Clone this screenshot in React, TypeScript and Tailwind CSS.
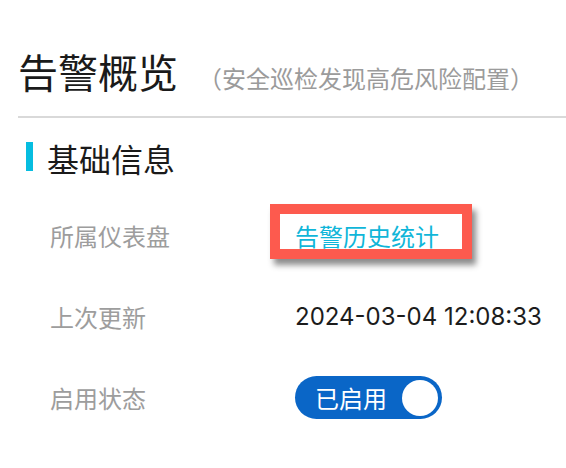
export default function App() {
  return (
    <div
      className="w-[566px] h-[468px] bg-white overflow-hidden"
      style={{ fontFamily: '"Noto Sans CJK SC", "Noto Sans", sans-serif' }}
    >
      <div className="pt-[51px] pl-[18px] flex items-baseline">
        <h1 className="text-[40px] leading-[40px] text-[#1a1a1a] font-normal">告警概览</h1>
        <span className="ml-[20px] text-[24px] leading-[24px] text-[#9b9b9b]">（安全巡检发现高危风险配置）</span>
      </div>
      <div className="ml-[18px] mt-[25px] h-[2px] bg-[#d9d9d9]" />
      <div className="mt-[24px] ml-[26px] flex items-center">
        <div className="w-[7px] h-[29px] bg-[#06bde0] -mt-[3px]" />
        <h2 className="ml-[14px] text-[32px] leading-[32px] text-[#1a1a1a] font-normal">基础信息</h2>
      </div>
      <div className="mt-[21px]">
        <div className="h-[81px] flex items-center">
          <div className="w-[295px] pl-[50px] text-[24px] leading-[24px] text-[#9d9d9d]">所属仪表盘</div>
          <div className="relative text-[24px] leading-[24px] text-[#10b6d9]">
            <div className="absolute left-[-25px] top-[-20px] w-[202px] h-[55px] border-[10px] border-[#fd5a4e] shadow-[4px_6px_6px_rgba(0,0,0,0.45)]" />
            <span className="relative">告警历史统计</span>
          </div>
        </div>
        <div className="h-[81px] flex items-center">
          <div className="w-[295px] pl-[50px] text-[24px] leading-[24px] text-[#9d9d9d]">上次更新</div>
          <div
            className="text-[24px] leading-[24px] text-[#1c1c1c]"
            style={{ fontFamily: 'Inter, "Noto Sans", sans-serif' }}
          >
            2024-03-04 12:08:33
          </div>
        </div>
        <div className="h-[81px] flex items-center">
          <div className="w-[295px] pl-[50px] text-[24px] leading-[24px] text-[#9d9d9d]">启用状态</div>
          <div className="w-[147px] h-[43px] rounded-full bg-[#0a66c7] flex items-center justify-between pl-[20px] pr-[4px]">
            <span className="text-[24px] leading-[24px] text-white">已启用</span>
            <span className="w-[36px] h-[36px] rounded-full bg-white" />
          </div>
        </div>
      </div>
    </div>
  );
}
